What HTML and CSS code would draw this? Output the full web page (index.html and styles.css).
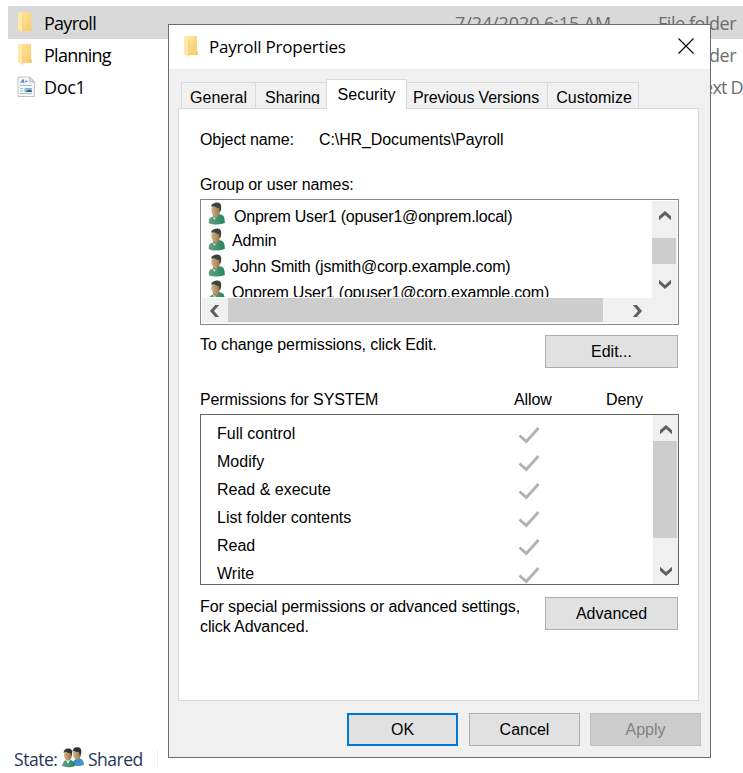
FILE: index.html
```html
<!DOCTYPE html>
<html lang="en">
<head>
<meta charset="utf-8">
<title>Payroll Properties</title>
<link rel="stylesheet" href="styles.css">
</head>
<body>
<svg class="defs" width="0" height="0">
  <defs>
    <linearGradient id="gold" x1="0" y1="0" x2="1" y2="1"><stop offset="0" stop-color="#ffe59b"/><stop offset="1" stop-color="#f3cb69"/></linearGradient>
    <linearGradient id="skin"><stop offset="0" stop-color="#d5b584"/><stop offset="1" stop-color="#96714a"/></linearGradient>
    <linearGradient id="green"><stop offset="0" stop-color="#65a385"/><stop offset="1" stop-color="#25845c"/></linearGradient>
    <linearGradient id="blue"><stop offset="0" stop-color="#3583c0"/><stop offset="1" stop-color="#4b9bd4"/></linearGradient>
    <symbol id="folder" viewBox="0 0 15 22">
      <path d="M3 0H13V15L14 16V19H3Z" fill="url(#gold)"/>
      <path d="M0 0H2L5 3V21L0 18Z" fill="#ffe8a8"/>
      <path d="M4.6 3V20.5" stroke="#eccb79" stroke-width=".7"/>
    </symbol>
    <symbol id="user" viewBox="0 0 18 23">
      <path d="M.8 21.2V18Q1.5 15.3 5 14.5L10.5 12Q13.5 12.2 15.5 14Q17 16.5 16.8 21Q13 22.8 8 22.4Q3.5 22.5 .8 21.2Z" fill="url(#green)"/>
      <path d="M4.8 14.5L6.3 18L9.8 13Z" fill="#e8efe8"/>
      <path d="M5.2 11H9.8V13.5L7 16.6L5 14.5Z" fill="#a9875a"/>
      <ellipse cx="7.8" cy="8" rx="4.5" ry="6.1" fill="url(#skin)"/>
      <path d="M3 4.5Q3.5 1.5 6 1.2Q8 0 11 .8Q13.6 2 13.2 6Q13 9 11.8 10L11 6Q8 6 6.5 4.2Z" fill="#3c423f"/>
    </symbol>
    <symbol id="tick" viewBox="0 0 24 20">
      <path d="M2.5 10.5L9.3 16.5L21.5 3" fill="none" stroke="#b1b1b1" stroke-width="2.8"/>
    </symbol>
    <symbol id="chevron" viewBox="0 0 12 10">
      <path d="M0 5.2L6 0L12 5.2V9.2L6 4L0 9.2Z" fill="#606060"/>
    </symbol>
  </defs>
</svg>

<main class="explorer">
  <div class="file selected"><svg class="folder"><use href="#folder"/></svg><span class="name">Payroll</span><span class="date">7/24/2020 6:15 AM</span><span class="type">File folder</span></div>
  <div class="file"><svg class="folder"><use href="#folder"/></svg><span class="name">Planning</span><span class="date"></span><span class="type">File folder</span></div>
  <div class="file">
    <svg class="doc" viewBox="0 0 19 22">
      <path d="M1 1H12.5L17.5 6V20.5H1Z" fill="#f4f6f8" stroke="#c2c2c2"/>
      <path d="M12.5 1V6H17.5Z" fill="#ddd" stroke="#aaa" stroke-width=".6"/>
      <path d="M3.5 7L6 3.5L7 7M4.6 5.8H7M8 5.3H10.5" fill="none" stroke="#4a72d0" stroke-width="1"/>
      <path d="M3 9.5H15M3 12.5H6M3 15H6M3 17.5H15" stroke="#9cc4cc" stroke-width="1.2"/>
      <path d="M7.5 12H15V16H7.5Z" fill="#8cb7d9"/><path d="M9 15.5L12 13.5L15 15V16H9Z" fill="#355778"/>
    </svg>
    <span class="name doc-name">Doc1</span><span class="date"></span><span class="type rich">Rich Text D</span>
  </div>
  <footer class="status"><span class="state">State:</span>
    <svg class="people" viewBox="0 0 23 21">
      <path d="M10 18Q11 12 17 11Q22 12 22 18Q17 20 10 18Z" fill="url(#blue)"/>
      <ellipse cx="15" cy="7" rx="4" ry="5.5" fill="url(#skin)"/>
      <path d="M10.5 5Q11 0 15 .3Q20 0 19.3 6L18 9L17 5Q13 5 12 3.5Z" fill="#303231"/>
      <path d="M0 19Q1 13 6 12.5Q12.5 13 13 19Q7 21.5 0 19Z" fill="url(#green)"/>
      <path d="M4 13L6 17L8 13Z" fill="#e8efe8"/>
      <ellipse cx="6" cy="8" rx="4" ry="5.5" fill="url(#skin)"/>
      <path d="M1.5 6Q2 1.5 6 1.5Q10.5 1 10.2 6L9.3 9L8.5 6Q5 6 4 4.5Z" fill="#303231"/>
    </svg>
    <span class="shared">Shared</span><i class="rule"></i>
  </footer>
</main>

<section class="dialog">
  <header class="titlebar">
    <svg class="folder"><use href="#folder"/></svg><span class="title">Payroll Properties</span>
    <svg class="close" viewBox="0 0 16 16"><path d="M.5 .5L15.5 15.5M15.5 .5L.5 15.5" stroke="#000" stroke-width="1.1"/></svg>
  </header>
  <nav class="tabs">
    <span class="tab general">General</span><span class="tab sharing"><span>Sharing</span></span><span class="tab active">Security</span><span class="tab previous">Previous Versions</span><span class="tab customize">Customize</span>
  </nav>
  <div class="panel">
    <div class="object"><span>Object name:</span><span>C:\HR_Documents\Payroll</span></div>
    <div class="label">Group or user names:</div>
    <div class="users">
      <div class="view">
        <ul>
          <li class="first"><svg><use href="#user"/></svg><span>Onprem User1 (opuser1@onprem.local)</span></li>
          <li class="second"><svg><use href="#user"/></svg><span>Admin</span></li>
          <li><svg><use href="#user"/></svg><span>John Smith (jsmith@corp.example.com)</span></li>
          <li><svg><use href="#user"/></svg><span>Onprem User1 (opuser1@corp.example.com)</span></li>
        </ul>
        <div class="vbar"><svg class="chev"><use href="#chevron"/></svg><i></i><svg class="chev down"><use href="#chevron"/></svg></div>
      </div>
      <div class="hbar"><svg class="chev left"><use href="#chevron"/></svg><i></i><svg class="chev right"><use href="#chevron"/></svg></div>
    </div>
    <div class="change"><span>To change permissions, click Edit.</span><button>Edit...</button></div>
    <div class="heads"><span>Permissions for SYSTEM</span><span>Allow</span><span>Deny</span></div>
    <div class="permissions">
      <ul>
        <li><span>Full control</span><svg><use href="#tick"/></svg></li>
        <li><span>Modify</span><svg><use href="#tick"/></svg></li>
        <li><span>Read &amp; execute</span><svg><use href="#tick"/></svg></li>
        <li><span>List folder contents</span><svg><use href="#tick"/></svg></li>
        <li><span>Read</span><svg><use href="#tick"/></svg></li>
        <li><span>Write</span><svg><use href="#tick"/></svg></li>
      </ul>
      <div class="vbar"><svg class="chev"><use href="#chevron"/></svg><i></i><svg class="chev down"><use href="#chevron"/></svg></div>
    </div>
    <div class="special"><p>For special permissions or advanced settings,<br>click Advanced.</p><button>Advanced</button></div>
  </div>
  <footer class="actions"><button class="ok">OK</button><button>Cancel</button><button class="apply" disabled>Apply</button></footer>
</section>
</body>
</html>
```
FILE: styles.css
```css
* { box-sizing: border-box; }
body { margin: 0; width: 743px; height: 773px; overflow: hidden; background: #fff; color: #000; font: 16px/20px "Liberation Sans", Arial, sans-serif; }
svg { display: block; flex: none; }
ul, p { margin: 0; padding: 0; list-style: none; }
span { white-space: nowrap; }
.defs { position: absolute; }

.explorer { height: 773px; padding: 7px 0 0 8px; display: flex; flex-direction: column; font: 18px/32px "Open Sans", "Noto Sans", sans-serif; }
.file { height: 32px; flex: none; display: grid; grid-template-columns: 36px 411px 203px 1fr; }
.selected { background: #d9d9d9; box-shadow: 0 -1px #d9d9d9; }
.folder { width: 15px; height: 22px; margin: 5px 0 0 10px; }
.doc { width: 19px; height: 22px; margin: 5px 0 0 9px; }
.name { letter-spacing: -.74px; }
.doc-name { letter-spacing: -.3px; }
.date { color: #6d6d6d; letter-spacing: -.1px; }
.type { color: #6d6d6d; letter-spacing: -.45px; }
.rich { letter-spacing: -.8px; }
.status { margin-top: auto; height: 30px; display: flex; align-items: flex-start; padding-left: 6px; color: #1e395b; font-size: 17.5px; line-height: 32px; }
.state { width: 48px; letter-spacing: -.45px; }
.people { width: 23px; height: 21px; margin-top: 4px; }
.shared { width: 69px; margin-left: 3px; letter-spacing: -.5px; }
.rule { width: 1px; height: 17px; margin-top: 7px; background: #eee; }

.dialog { position: absolute; left: 168px; top: 24px; width: 543px; height: 734px; border: 1px solid #6b6b6b; background: #f0f0f0; }
.titlebar { height: 44px; background: #fff; display: flex; font: 17px/44px "Open Sans", "Noto Sans", sans-serif; }
.titlebar .folder { margin: 11px 0 0 15px; }
.title { margin-left: 10px; letter-spacing: -.22px; }
.close { width: 16px; height: 16px; margin: 13px 16px 0 auto; }

.tabs { display: flex; align-items: flex-end; height: 40px; padding: 0 0 1px 12px; }
.tab { height: 26px; line-height: 30px; border: 1px solid #d9d9d9; border-width: 1px 0 0 1px; text-align: center; }
.general { width: 74px; }
.sharing { width: 71px; padding-left: 3px; letter-spacing: -.05px; }
.sharing span { display: block; height: 21px; overflow: hidden; }
.active { width: 81px; height: 30px; margin-bottom: -1px; background: #fff; border-width: 1px 1px 0; line-height: 29px; position: relative; }
.previous { width: 140px; padding-right: 2px; border-left: 0; letter-spacing: -.12px; }
.customize { width: 92px; padding-left: 2px; border-right-width: 1px; }

.panel { width: 521px; height: 593px; margin: -1px 0 0 9px; border: 1px solid #d9d9d9; background: #fff; padding: 21px 20px 0 21px; letter-spacing: -.1px; }
.object { display: flex; height: 20px; }
.object span:first-child { width: 119px; }
.label { margin-top: 25px; height: 20px; }
.users { width: 479px; height: 126px; margin-top: 4px; border: 1px solid #828790; padding: 1px; }
.view { display: flex; height: 97px; }
.view ul { width: 450px; height: 96px; overflow: hidden; }
.view li { display: flex; height: 26px; padding: 1px 0 0 6px; line-height: 26px; }
.view li svg { width: 18px; height: 23px; }
.view li span { margin-left: 6px; letter-spacing: -.15px; }
.view .first span { margin: 2px 0 0 8px; letter-spacing: -.21px; }
.view .second span { margin-top: 0; }
.view li:last-child span { letter-spacing: -.2px; }
.vbar { width: 25px; background: #f0f0f0; display: flex; flex-direction: column; }
.vbar i { width: 24px; background: #cdcdcd; }
.chev { width: 12px; height: 10px; }
.vbar .chev { margin-left: 7px; }
.down { transform: rotate(180deg); }
.left { transform: rotate(-90deg); }
.right { transform: rotate(90deg); }
.view .vbar .chev { margin-top: 10px; }
.view .vbar i { height: 26px; margin-top: 17px; }
.view .vbar .down { margin-top: 15px; }
.hbar { display: flex; height: 25px; background: #f0f0f0; }
.hbar i { width: 375px; height: 24px; background: #cdcdcd; margin-left: 7px; }
.hbar .left { margin: 8px 0 0 7px; }
.hbar .right { margin: 8px 0 0 28px; }
.change { display: flex; justify-content: space-between; height: 43px; padding-top: 10px; }
button { width: 133px; height: 33px; padding: 0; border: 1px solid #adadad; border-radius: 0; background: #e1e1e1; color: #000; font: inherit; flex: none; }
.heads { display: grid; grid-template-columns: 314px 92px 1fr; height: 20px; margin-top: 22px; }
.permissions { display: flex; width: 479px; height: 171px; margin-top: 4px; border: 1px solid #646464; }
.permissions ul { width: 452px; overflow: hidden; padding-top: 4px; letter-spacing: 0; }
.permissions li { display: grid; grid-template-columns: 300px 1fr; height: 28px; line-height: 30px; padding-left: 16px; }
.permissions li svg { width: 24px; height: 20px; margin-top: 6px; }
.permissions .vbar .chev { margin-top: 10px; }
.permissions .vbar i { height: 97px; margin-top: 6px; }
.permissions .vbar .down { margin-top: 28px; }
.special { display: flex; justify-content: space-between; padding: 12px 0 0; }
.actions { display: flex; justify-content: flex-end; gap: 11px; padding: 12px 9px 0 0; }
.actions button { width: 111px; }
.actions .ok { border: 2px solid #0078d7; }
.actions .apply { margin-left: -1px; background: #ccc; border-color: #bfbfbf; color: #838383; }
```
